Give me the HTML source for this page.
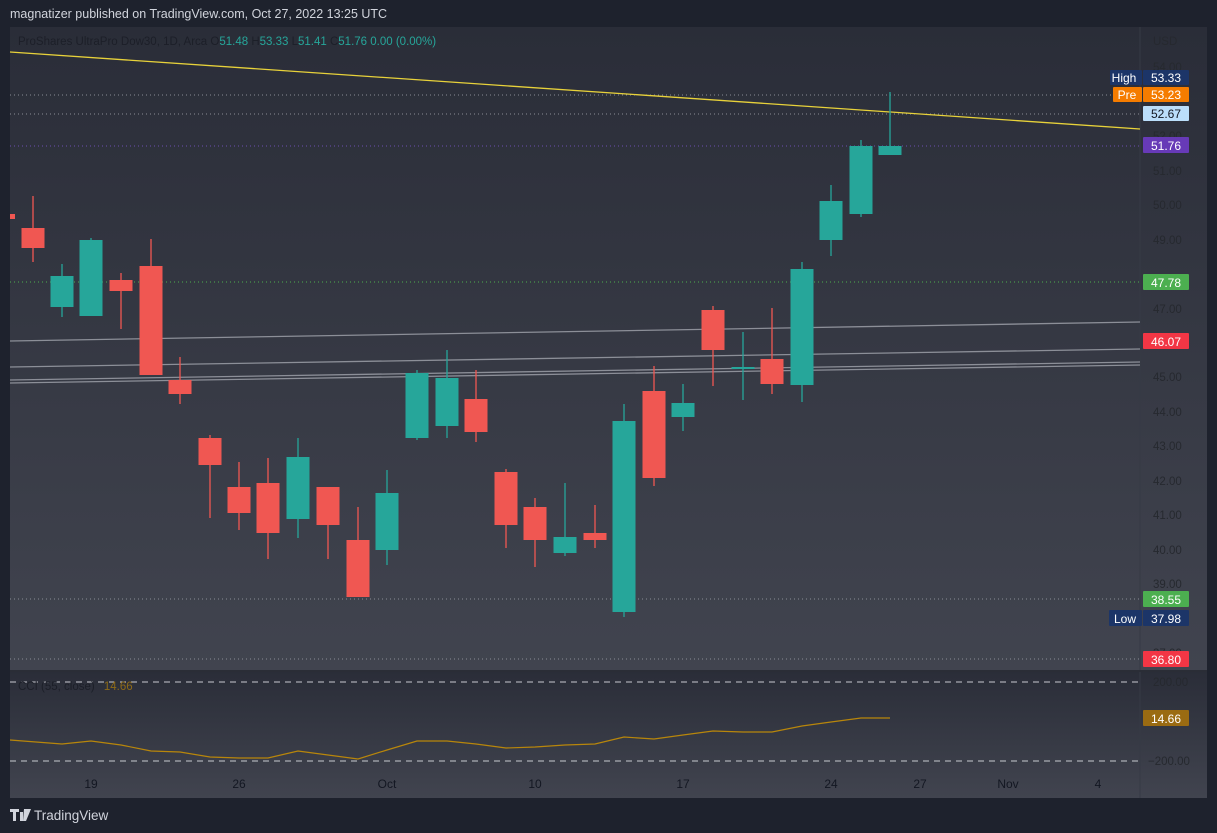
<!DOCTYPE html>
<html><head><meta charset="utf-8"><style>
html,body{margin:0;padding:0;background:#1e222d;width:1217px;height:833px;overflow:hidden;font-family:"Liberation Sans",sans-serif}
</style></head><body>
<svg width="1217" height="833" viewBox="0 0 1217 833" xmlns="http://www.w3.org/2000/svg" font-family="Liberation Sans, sans-serif">
<defs>
<linearGradient id="bg" x1="0" y1="0" x2="0" y2="1"><stop offset="0" stop-color="#2a2d38"/><stop offset="1" stop-color="#41444f"/></linearGradient>
<linearGradient id="bg2" x1="0" y1="0" x2="0" y2="1"><stop offset="0" stop-color="#2a2d38"/><stop offset="1" stop-color="#41444f"/></linearGradient>
</defs>
<rect width="1217" height="833" fill="#1e222d"/>
<text x="10" y="18" fill="#d1d4dc" font-size="12.5">magnatizer published on TradingView.com, Oct 27, 2022 13:25 UTC</text>
<rect x="10" y="27" width="1197" height="644" fill="url(#bg)"/>
<rect x="10" y="671" width="1197" height="127" fill="url(#bg2)"/>
<line x1="1140" y1="27" x2="1140" y2="798" stroke="#363a45" stroke-width="1"/>
<line x1="10" y1="671" x2="1207" y2="671" stroke="#2a2d36" stroke-width="2"/>
<g fill="#26292f" font-size="11.5" text-anchor="start">
<text x="1153" y="45">USD</text>
<text x="1153" y="71">54.00</text><text x="1153" y="175">51.00</text><text x="1153" y="209">50.00</text>
<text x="1153" y="244">49.00</text><text x="1153" y="313">47.00</text><text x="1153" y="381">45.00</text>
<text x="1153" y="416">44.00</text><text x="1153" y="450">43.00</text><text x="1153" y="485">42.00</text>
<text x="1153" y="519">41.00</text><text x="1153" y="554">40.00</text><text x="1153" y="588">39.00</text>
<text x="1153" y="140">52.00</text><text x="1153" y="657">37.00</text>
<text x="1153" y="686">200.00</text><text x="1148" y="765">−200.00</text>
</g>
<g fill="#131722" font-size="12" text-anchor="middle">
<text x="91" y="788">19</text><text x="239" y="788">26</text><text x="387" y="788">Oct</text><text x="535" y="788">10</text>
<text x="683" y="788">17</text><text x="831" y="788">24</text><text x="920" y="788">27</text><text x="1008" y="788">Nov</text><text x="1098" y="788">4</text>
</g>
<text x="18" y="45" font-size="11.5" fill="#1c1f28">ProShares UltraPro Dow30, 1D, Arca  O<tspan fill="#26a69a">51.48</tspan> H<tspan fill="#26a69a">53.33</tspan> L<tspan fill="#26a69a">51.41</tspan> C<tspan fill="#26a69a">51.76</tspan> <tspan fill="#26a69a">0.00 (0.00%)</tspan></text>
<g stroke-dasharray="1,3" stroke-width="1">
<line x1="10" y1="95" x2="1140" y2="95" stroke="#8a8d96"/>
<line x1="10" y1="114" x2="1140" y2="114" stroke="#8a8d96"/>
<line x1="10" y1="146" x2="1140" y2="146" stroke="#6c4fb0"/>
<line x1="10" y1="282" x2="1140" y2="282" stroke="#4caf50"/>
<line x1="10" y1="599" x2="1140" y2="599" stroke="#8a8d96"/>
<line x1="10" y1="659" x2="1140" y2="659" stroke="#8a8d96"/>
</g>
<g stroke="#c8cad0" stroke-dasharray="6,5" stroke-width="1">
<line x1="10" y1="682" x2="1140" y2="682"/><line x1="10" y1="761" x2="1140" y2="761"/>
</g>
<line x1="10" y1="52" x2="1140" y2="129" stroke="#e8d23a" stroke-width="1.3"/>
<g stroke="#8c8f98" stroke-width="1.3">
<line x1="10" y1="341" x2="1140" y2="322"/><line x1="10" y1="367" x2="1140" y2="349"/>
<line x1="10" y1="380" x2="1140" y2="362"/><line x1="10" y1="383" x2="1140" y2="365"/>
</g>
<rect x="10" y="214" width="5" height="5" fill="#f05752"/>
<g stroke="#f05752" stroke-width="1.3">
<line x1="33" y1="196" x2="33" y2="262"/><line x1="121" y1="273" x2="121" y2="329"/><line x1="151" y1="239" x2="151" y2="375"/>
<line x1="180" y1="357" x2="180" y2="404"/><line x1="210" y1="435" x2="210" y2="518"/><line x1="239" y1="462" x2="239" y2="530"/>
<line x1="268" y1="458" x2="268" y2="559"/><line x1="328" y1="487" x2="328" y2="559"/><line x1="358" y1="507" x2="358" y2="597"/>
<line x1="476" y1="370" x2="476" y2="442"/><line x1="506" y1="469" x2="506" y2="548"/><line x1="535" y1="498" x2="535" y2="567"/>
<line x1="595" y1="505" x2="595" y2="548"/><line x1="654" y1="366" x2="654" y2="486"/><line x1="713" y1="306" x2="713" y2="386"/>
<line x1="772" y1="308" x2="772" y2="394"/>
</g>
<g fill="#f05752">
<rect x="21.5" y="228" width="23" height="20"/><rect x="109.5" y="280" width="23" height="11"/><rect x="139.5" y="266" width="23" height="109"/>
<rect x="168.5" y="380" width="23" height="14"/><rect x="198.5" y="438" width="23" height="27"/><rect x="227.5" y="487" width="23" height="26"/>
<rect x="256.5" y="483" width="23" height="50"/><rect x="316.5" y="487" width="23" height="38"/><rect x="346.5" y="540" width="23" height="57"/>
<rect x="464.5" y="399" width="23" height="33"/><rect x="494.5" y="472" width="23" height="53"/><rect x="523.5" y="507" width="23" height="33"/>
<rect x="583.5" y="533" width="23" height="7"/><rect x="642.5" y="391" width="23" height="87"/><rect x="701.5" y="310" width="23" height="40"/>
<rect x="760.5" y="359" width="23" height="25"/>
</g>
<g stroke="#26a69a" stroke-width="1.3">
<line x1="62" y1="264" x2="62" y2="317"/><line x1="91" y1="238" x2="91" y2="316"/><line x1="298" y1="438" x2="298" y2="538"/>
<line x1="387" y1="470" x2="387" y2="565"/><line x1="417" y1="370" x2="417" y2="440"/><line x1="447" y1="350" x2="447" y2="438"/>
<line x1="565" y1="483" x2="565" y2="556"/><line x1="624" y1="404" x2="624" y2="617"/><line x1="683" y1="384" x2="683" y2="431"/>
<line x1="743" y1="332" x2="743" y2="400"/><line x1="802" y1="262" x2="802" y2="402"/><line x1="831" y1="185" x2="831" y2="256"/>
<line x1="861" y1="140" x2="861" y2="217"/><line x1="890" y1="92" x2="890" y2="155"/>
</g>
<g fill="#26a69a">
<rect x="50.5" y="276" width="23" height="31"/><rect x="79.5" y="240" width="23" height="76"/><rect x="286.5" y="457" width="23" height="62"/>
<rect x="375.5" y="493" width="23" height="57"/><rect x="405.5" y="373" width="23" height="65"/><rect x="435.5" y="378" width="23" height="48"/>
<rect x="553.5" y="537" width="23" height="16"/><rect x="612.5" y="421" width="23" height="191"/><rect x="671.5" y="403" width="23" height="14"/>
<rect x="731.5" y="367" width="23" height="2"/><rect x="790.5" y="269" width="23" height="116"/><rect x="819.5" y="201" width="23" height="39"/>
<rect x="849.5" y="146" width="23" height="68"/><rect x="878.5" y="146" width="23" height="9"/>
</g>
<polyline fill="none" stroke="#b8860b" stroke-width="1.2" points="10,740 62,744 91,741 121,745 151,751 180,752 210,757 239,758 268,758 298,751 328,755 358,759 387,750 417,741 447,741 476,744 506,748 535,747 565,745 595,744 624,737 654,739 683,735 713,731 743,732 772,732 802,726 831,722 861,718 890,718"/>
<text x="18" y="690" font-size="11.5" fill="#1c1f28">CCI (55, close) <tspan fill="#8d6a17" dx="6">14.66</tspan></text>
<g font-size="12" text-anchor="middle">
<rect x="1110" y="70" width="32" height="15" fill="#1c3568" rx="1"/><text x="1124" y="82" fill="#fff">High</text>
<rect x="1143" y="70" width="46" height="15" fill="#1c3568" rx="1"/><text x="1166" y="82" fill="#fff">53.33</text>
<rect x="1113" y="87" width="29" height="15" fill="#f57c00" rx="1"/><text x="1127" y="99" fill="#fff">Pre</text>
<rect x="1143" y="87" width="46" height="15" fill="#f57c00" rx="1"/><text x="1166" y="99" fill="#fff">53.23</text>
<rect x="1143" y="106" width="46" height="15" fill="#bbdefb" rx="1"/><text x="1166" y="118" fill="#131722">52.67</text>
<rect x="1143" y="137" width="46" height="16" fill="#673ab7" rx="1"/><text x="1166" y="150" fill="#fff">51.76</text>
<rect x="1143" y="274" width="46" height="16" fill="#4caf50" rx="1"/><text x="1166" y="287" fill="#fff">47.78</text>
<rect x="1143" y="333" width="46" height="16" fill="#f23645" rx="1"/><text x="1166" y="346" fill="#fff">46.07</text>
<rect x="1143" y="591" width="46" height="16" fill="#4caf50" rx="1"/><text x="1166" y="604" fill="#fff">38.55</text>
<rect x="1109" y="610" width="33" height="16" fill="#1c3568" rx="1"/><text x="1125" y="623" fill="#fff">Low</text>
<rect x="1143" y="610" width="46" height="16" fill="#1c3568" rx="1"/><text x="1166" y="623" fill="#fff">37.98</text>
<rect x="1143" y="651" width="46" height="16" fill="#f23645" rx="1"/><text x="1166" y="664" fill="#fff">36.80</text>
<rect x="1143" y="710" width="46" height="16" fill="#9a6b12" rx="1"/><text x="1166" y="723" fill="#fff">14.66</text>
</g>
<g fill="#d1d4dc"><path d="M10 809h9v3h-3v9h-3v-9h-3z M20 812h3v9h-3z M24 809h7l-5 12h-3z"/></g>
<text x="34" y="820" font-size="13.5" fill="#d1d4dc">TradingView</text>
</svg>
</body></html>
